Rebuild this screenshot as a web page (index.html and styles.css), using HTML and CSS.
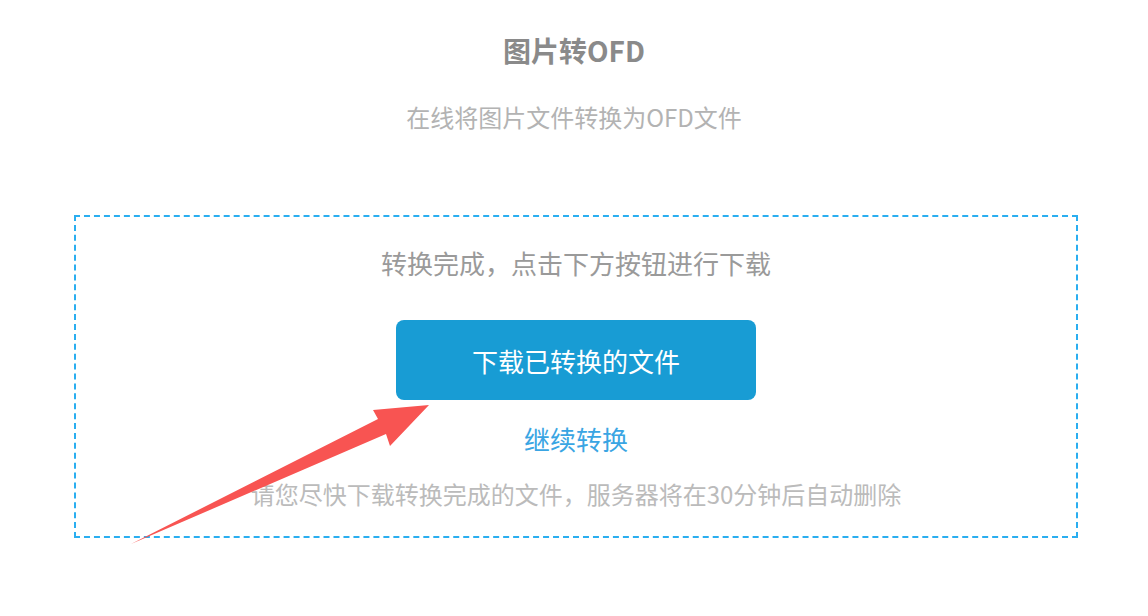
FILE: index.html
```html
<!DOCTYPE html>
<html lang="zh-CN">
<head>
<meta charset="utf-8">
<title>图片转OFD</title>
<link rel="stylesheet" href="styles.css">
</head>
<body>
<main class="page">
  <header class="intro">
    <h1 class="title">图片转OFD</h1>
    <p class="subtitle">在线将图片文件转换为OFD文件</p>
  </header>
  <section class="result-box">
    <p class="message">转换完成，点击下方按钮进行下载</p>
    <button class="download-btn" type="button">下载已转换的文件</button>
    <a class="continue-link" href="#">继续转换</a>
    <p class="note">请您尽快下载转换完成的文件，服务器将在30分钟后自动删除</p>
  </section>
  <svg class="arrow" width="1148" height="616" viewBox="0 0 1148 616" aria-hidden="true">
    <polygon points="131,544 378,419 373,410 429,405 390,446 386,434" fill="#f85452"/>
  </svg>
</main>
</body>
</html>
```
FILE: styles.css
```css
html, body {
  margin: 0;
  padding: 0;
  background: #ffffff;
}

body {
  font-family: "Noto Sans CJK SC", "Noto Sans", sans-serif;
  width: 1148px;
  height: 616px;
  overflow: hidden;
}

.page {
  position: relative;
  width: 1148px;
  height: 616px;
}

.intro {
  display: flex;
  flex-direction: column;
  align-items: center;
  padding-top: 32px;
}

.title {
  margin: 0;
  font-size: 28px;
  line-height: 36px;
  font-weight: 700;
  color: #8a8a8a;
}

.subtitle {
  margin: 32px 0 0;
  font-size: 24px;
  line-height: 34px;
  color: #b3b3b3;
}

.result-box {
  box-sizing: border-box;
  width: 1004px;
  margin: 81px 0 0 74px;
  border: 2px dashed #2aaef0;
  padding: 28px 0 25px;
  display: flex;
  flex-direction: column;
  align-items: center;
}

.message {
  margin: 0;
  font-size: 26px;
  line-height: 36px;
  color: #9a9a9a;
}

.download-btn {
  margin-top: 39px;
  width: 360px;
  height: 80px;
  border: 0;
  border-radius: 8px;
  background: #189cd4;
  color: #ffffff;
  font-family: inherit;
  font-size: 26px;
  cursor: pointer;
}

.continue-link {
  margin-top: 21px;
  font-size: 26px;
  line-height: 36px;
  color: #3aa5e3;
  text-decoration: none;
}

.note {
  margin: 20px 0 0;
  font-size: 24px;
  line-height: 34px;
  color: #bbbbbb;
}

.arrow {
  position: absolute;
  left: 0;
  top: 0;
  pointer-events: none;
}
```
